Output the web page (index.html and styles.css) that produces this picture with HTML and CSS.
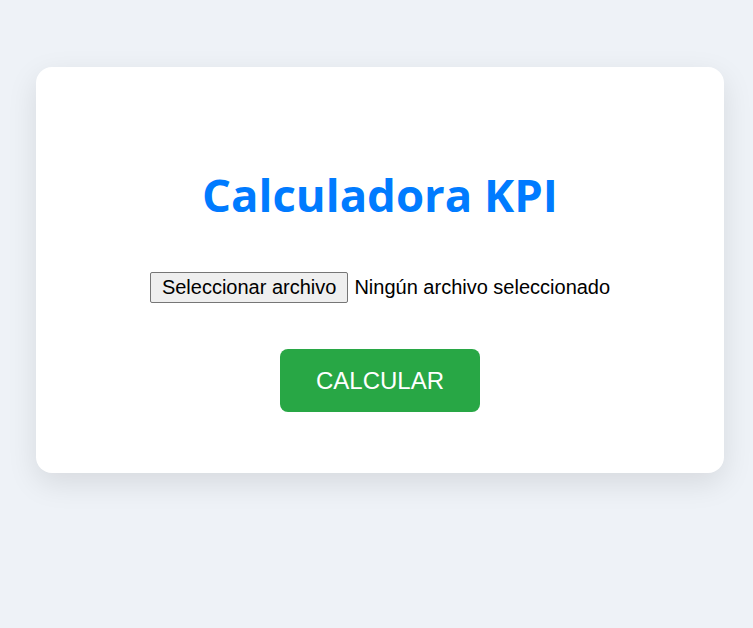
FILE: index.html
```html
<!DOCTYPE html>
<html lang="es">
<head>
<meta charset="utf-8">
<title>Calculadora KPI</title>
<link rel="stylesheet" href="styles.css">
</head>
<body>
<div class="card">
  <h1 class="title">Calculadora KPI</h1>
  <form class="form">
    <label class="file">
      <input class="file-input" type="file">
      <span class="file-btn">Seleccionar archivo</span>
      <span class="file-name">Ningún archivo seleccionado</span>
    </label>
    <button class="calc" type="button">CALCULAR</button>
  </form>
</div>
</body>
</html>
```
FILE: styles.css
```css
html, body {
  margin: 0;
  padding: 0;
}
body {
  background: #eef2f7;
  font-family: "Liberation Sans", Arial, sans-serif;
  min-height: 628px;
  padding-top: 67px;
  box-sizing: border-box;
}
.card {
  margin-left: 36px;
  width: 688px;
  box-sizing: border-box;
  background: #fff;
  border-radius: 16px;
  box-shadow: 0 10px 30px rgba(0, 0, 0, 0.1);
  padding: 97px 40px 61px;
  text-align: center;
}
.title {
  margin: 0;
  font-family: "Segoe UI", "Open Sans", sans-serif;
  font-weight: 700;
  font-size: 45.5px;
  line-height: 60px;
  color: #007bff;
}
.form {
  margin-top: 48px;
  display: flex;
  flex-direction: column;
  align-items: center;
  gap: 46px;
}
.file {
  display: flex;
  align-items: center;
  gap: 6px;
  font-family: "Liberation Sans", Arial, sans-serif;
  font-size: 20px;
  color: #000;
  cursor: pointer;
}
.file-input {
  display: none;
}
.file-btn {
  height: 31px;
  box-sizing: border-box;
  display: flex;
  align-items: center;
  padding: 0 11px;
  background: #efefef;
  border: 1px solid #767676;
  border-radius: 2px;
}
.calc {
  width: 200px;
  height: 63px;
  border: none;
  border-radius: 8px;
  background: #28a745;
  color: #fff;
  font-family: "Liberation Sans", Arial, sans-serif;
  font-size: 24px;
  cursor: pointer;
}
```
